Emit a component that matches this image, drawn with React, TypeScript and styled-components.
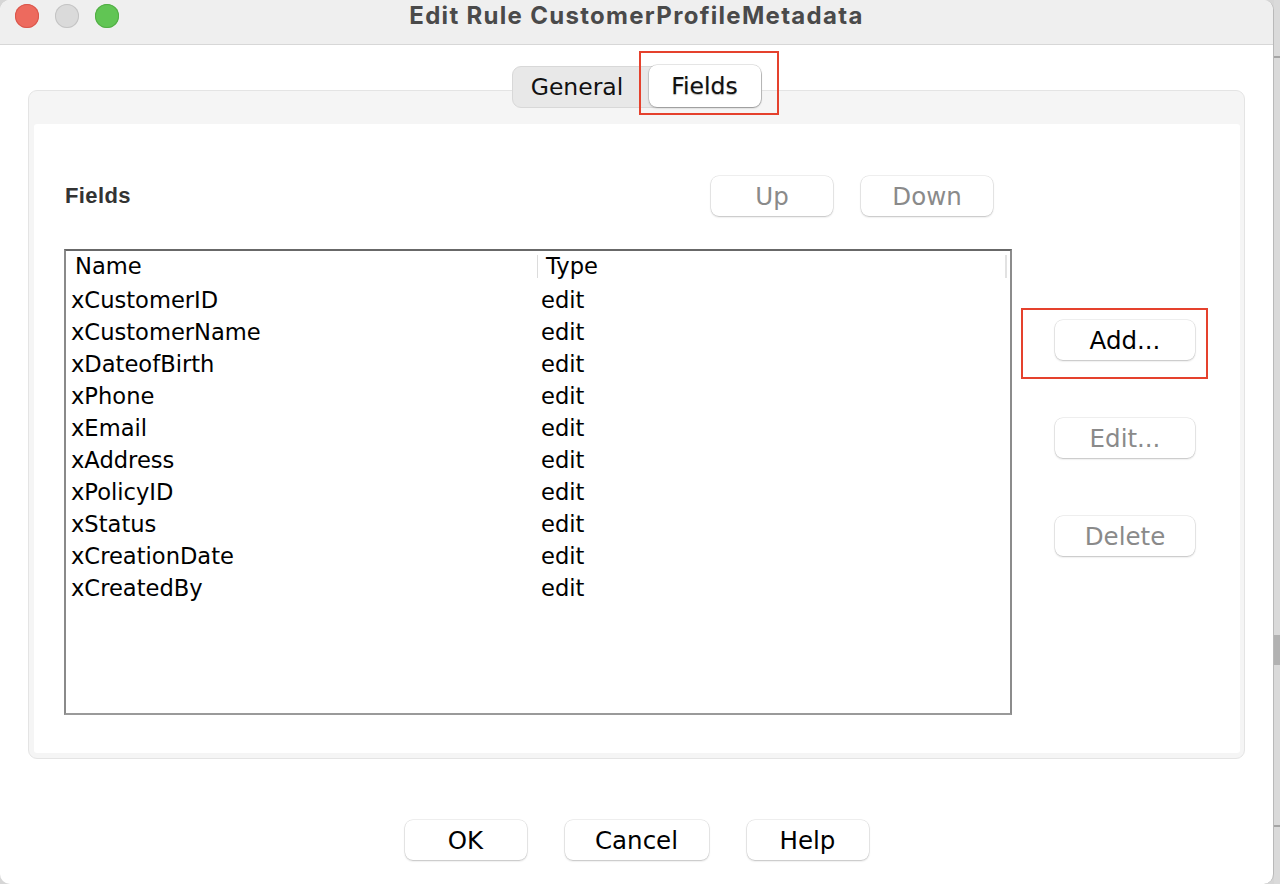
import styled, { createGlobalStyle } from "styled-components";

const GlobalStyle = createGlobalStyle`
  html, body {
    margin: 0;
    padding: 0;
    background: #d6d6d6;
    overflow: hidden;
  }
  * {
    box-sizing: border-box;
  }
`;

const Screen = styled.div`
  display: flex;
  width: 1280px;
  height: 884px;
`;

const Window = styled.div`
  width: 1274px;
  height: 884px;
  background: #ffffff;
  border-radius: 10px;
  border-right: 1px solid #b9b9b9;
  display: flex;
  flex-direction: column;
  overflow: hidden;
`;

const Strip = styled.div`
  flex: 1;
  display: flex;
  flex-direction: column;
  background: #dadada;
`;

const StripLine = styled.div<{ top: number }>`
  height: 2px;
  margin-top: ${(p) => p.top}px;
  background: #a5a5a5;
`;

const StripThumb = styled.div`
  height: 30px;
  margin-top: 577px;
  background: #b2b2b2;
`;

const TitleBar = styled.div`
  height: 45px;
  flex-shrink: 0;
  background: #efefef;
  border-bottom: 1px solid #d7d7d7;
  display: grid;
  grid-template-columns: 1fr auto 1fr;
  align-items: center;
`;

const Lights = styled.div`
  display: flex;
  gap: 16px;
  padding-left: 15px;
  margin-top: -12px;
`;

const Light = styled.span<{ color: string; edge: string }>`
  width: 24px;
  height: 24px;
  border-radius: 50%;
  background: ${(p) => p.color};
  box-shadow: inset 0 0 0 1px ${(p) => p.edge};
`;

const Title = styled.div`
  font-family: Inter, "Liberation Sans", sans-serif;
  font-weight: 700;
  font-size: 24px;
  letter-spacing: 1.3px;
  color: #4a4a4a;
  margin-top: -14px;
`;

const Body = styled.div`
  flex: 1;
  display: flex;
  flex-direction: column;
  align-items: center;
`;

const Tabs = styled.div`
  position: relative;
  z-index: 1;
  margin-top: 21px;
  margin-bottom: -18px;
  display: flex;
  height: 42px;
  background: #e8e8e8;
  border: 1px solid #d8d8d8;
  border-radius: 9px;
`;

const Tab = styled.div<{ active?: boolean; w: number }>`
  position: relative;
  width: ${(p) => p.w}px;
  display: flex;
  align-items: center;
  justify-content: center;
  padding-right: ${(p) => (p.active ? "0" : "7px")};
  font-family: "DejaVu Sans", sans-serif;
  font-size: 23.5px;
  color: #111;
  border-radius: 8px;
  margin-top: ${(p) => (p.active ? "-2px" : "0")};
  height: ${(p) => (p.active ? "42px" : "40px")};
  background: ${(p) => (p.active ? "#ffffff" : "transparent")};
  box-shadow: ${(p) =>
    p.active ? "0 0 0 0.5px rgba(0,0,0,0.18), 0 1px 2px rgba(0,0,0,0.25)" : "none"};
  text-shadow: ${(p) => (p.active ? "0 1px 1px rgba(0,0,0,0.3)" : "none")};
`;

const Mark = styled.div<{ t: number; r: number; b: number; l: number }>`
  position: absolute;
  top: ${(p) => p.t}px;
  right: ${(p) => p.r}px;
  bottom: ${(p) => p.b}px;
  left: ${(p) => p.l}px;
  border: 2px solid #e5412d;
  pointer-events: none;
`;

const Panel = styled.div`
  width: 1217px;
  height: 669px;
  background: #f5f5f5;
  border: 1px solid #e4e4e4;
  border-radius: 9px;
  padding: 33px 4px 5px 5px;
  display: flex;
`;

const Inner = styled.div`
  flex: 1;
  background: #ffffff;
  border-radius: 3px;
  padding: 52px 0 0 30px;
  display: grid;
  grid-template-columns: 948px 140px;
  grid-template-rows: 40px auto;
  column-gap: 43px;
  row-gap: 33px;
  align-content: start;
`;

const HeaderRow = styled.div`
  display: flex;
  align-items: center;
  gap: 28px;
  padding-right: 19px;
`;

const Label = styled.div`
  font-family: "Liberation Sans", Arial, sans-serif;
  font-weight: 700;
  font-size: 22px;
  letter-spacing: 0.4px;
  color: #333;
  padding-left: 1px;
  margin-right: auto;
`;

const Button = styled.button<{ w: number; disabled?: boolean }>`
  position: relative;
  width: ${(p) => p.w}px;
  height: 40px;
  padding: 0;
  background: #ffffff;
  border: none;
  border-radius: 8px;
  box-shadow: 0 0 0 0.5px rgba(0, 0, 0, 0.12), 0 1px 2px rgba(0, 0, 0, 0.2);
  font-family: "DejaVu Sans", sans-serif;
  font-size: 24.5px;
  color: ${(p) => (p.disabled ? "#8a8a8a" : "#000")};
`;

const Table = styled.div`
  height: 466px;
  border-style: solid;
  border-width: 2px;
  border-color: #686868 #8c8c8c #9a9a9a #8a8a8a;
  display: flex;
  flex-direction: column;
`;

const Row = styled.div<{ head?: boolean }>`
  display: grid;
  grid-template-columns: 471px 1fr;
  height: ${(p) => (p.head ? "33px" : "32px")};
  align-items: center;
  font-family: "DejaVu Sans", sans-serif;
  font-size: 22.6px;
  color: #000;
`;

const Cell = styled.div<{ head?: boolean; second?: boolean; last?: boolean }>`
  height: ${(p) => (p.head ? "23px" : "100%")};
  display: flex;
  align-items: center;
  padding-left: ${(p) => (p.head ? (p.second ? 8 : 9) : p.second ? 4 : 5)}px;
  padding-bottom: ${(p) => (p.head ? 1 : 1)}px;
  border-left: ${(p) => (p.head && p.second ? "1px solid #dcdcdc" : "none")};
  border-right: ${(p) => (p.head && p.last ? "2px solid #e2e2e2" : "none")};
  margin: ${(p) => (p.head ? "0 3px 2px 0" : "0")};
`;

const SideButtons = styled.div`
  display: flex;
  flex-direction: column;
  gap: 58px;
  padding-top: 71px;
`;

const Footer = styled.div`
  display: flex;
  gap: 38px;
  margin-top: 61px;
`;

const fields = [
  "xCustomerID",
  "xCustomerName",
  "xDateofBirth",
  "xPhone",
  "xEmail",
  "xAddress",
  "xPolicyID",
  "xStatus",
  "xCreationDate",
  "xCreatedBy",
];

export default function App() {
  return (
    <Screen>
      <GlobalStyle />
      <Window>
        <TitleBar>
          <Lights>
            <Light color="#ed6a5e" edge="#d9574c" />
            <Light color="#dadada" edge="#c4c4c4" />
            <Light color="#61c554" edge="#52ad45" />
          </Lights>
          <Title>Edit Rule CustomerProfileMetadata</Title>
          <div />
        </TitleBar>
        <Body>
          <Tabs>
            <Tab w={136}>General</Tab>
            <Tab w={112} active>
              Fields
              <Mark t={-14} r={-18} b={-8} l={-10} />
            </Tab>
          </Tabs>
          <Panel>
            <Inner>
              <HeaderRow>
                <Label>Fields</Label>
                <Button w={122} disabled>
                  Up
                </Button>
                <Button w={132} disabled>
                  Down
                </Button>
              </HeaderRow>
              <div />
              <Table>
                <Row head>
                  <Cell head>Name</Cell>
                  <Cell head second last>
                    Type
                  </Cell>
                </Row>
                {fields.map((f) => (
                  <Row key={f}>
                    <Cell>{f}</Cell>
                    <Cell second>edit</Cell>
                  </Row>
                ))}
              </Table>
              <SideButtons>
                <Button w={140}>
                  Add...
                  <Mark t={-12} r={-13} b={-19} l={-34} />
                </Button>
                <Button w={140} disabled>
                  Edit...
                </Button>
                <Button w={140} disabled>
                  Delete
                </Button>
              </SideButtons>
            </Inner>
          </Panel>
          <Footer>
            <Button w={122}>OK</Button>
            <Button w={144}>Cancel</Button>
            <Button w={122}>Help</Button>
          </Footer>
        </Body>
      </Window>
      <Strip>
        <StripLine top={56} />
        <StripThumb />
        <StripLine top={160} />
      </Strip>
    </Screen>
  );
}
